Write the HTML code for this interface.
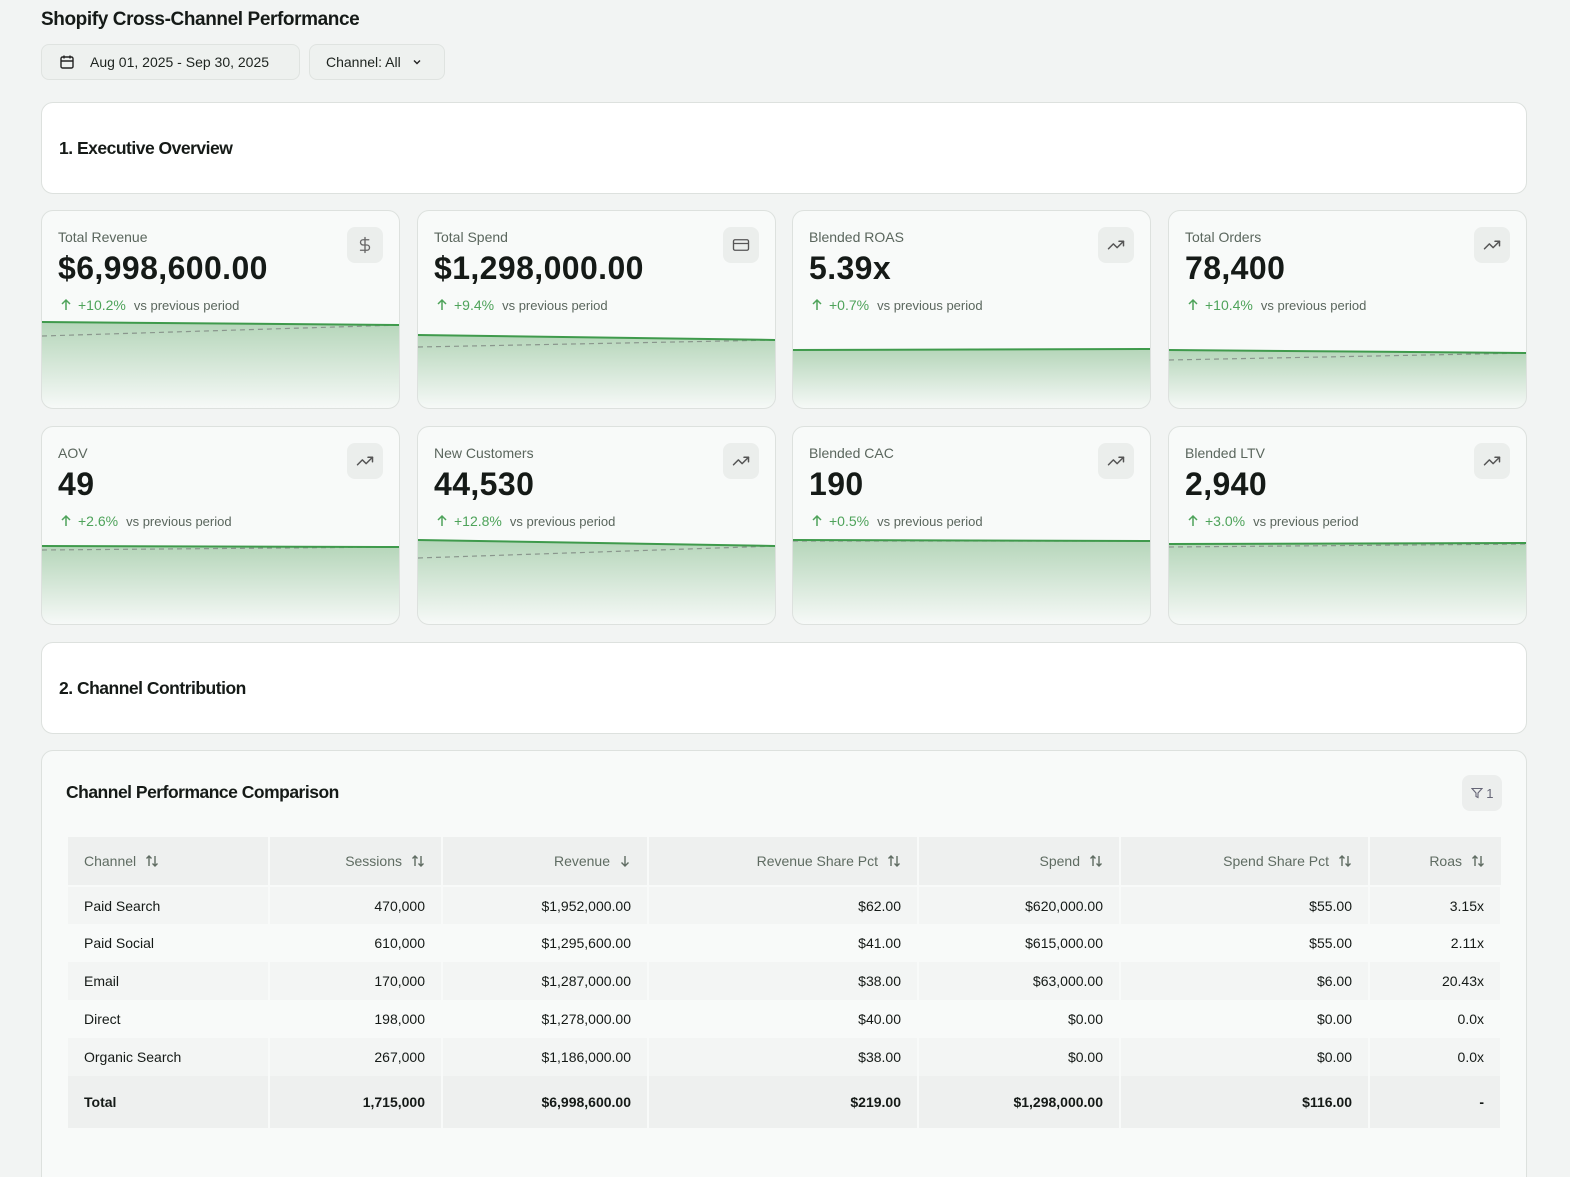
<!DOCTYPE html>
<html><head><meta charset="utf-8"><style>
*{box-sizing:border-box;margin:0;padding:0}
html,body{width:1570px;height:1177px;overflow:hidden}
body{background:#f2f4f3;font-family:"Liberation Sans",sans-serif;color:#151a17;position:relative}
.abs{position:absolute}
h1{position:absolute;left:41px;top:9px;font-size:19px;font-weight:700;letter-spacing:-0.4px}
.btn{position:absolute;top:44px;height:36px;border:1px solid #dfe3e0;border-radius:8px;background:#eef1ef;font-size:14px;display:flex;align-items:center;color:#1d231f}
.sec{position:absolute;left:41px;width:1486px;height:92px;background:#fff;border:1px solid #dde1de;border-radius:12px;font-size:17.5px;font-weight:700;padding-left:17px;display:flex;align-items:center;letter-spacing:-0.5px}
.card{position:absolute;width:359px;height:199px;background:#f8faf9;border:1px solid #dde1de;border-radius:12px;overflow:hidden}
.card svg.ch{position:absolute;left:0;top:0}
.lbl{position:absolute;left:16px;top:18px;font-size:14px;color:#5a665d}
.val{position:absolute;left:16px;top:39px;font-size:32px;font-weight:700;letter-spacing:0.4px}
.chg{position:absolute;left:17px;top:86px;font-size:13px;color:#5a665d;display:flex;align-items:center}
.chg b{font-weight:400;color:#4ea35a;font-size:14px;margin:0 8px 0 5px}
.ic{position:absolute;right:16px;top:16px;width:36px;height:36px;border-radius:8px;background:#ebeeec;display:flex;align-items:center;justify-content:center}
.tcard{position:absolute;left:41px;top:750px;width:1486px;height:440px;background:#f8faf9;border:1px solid #dde1de;border-radius:12px}
table{position:absolute;left:26px;top:86px;border-collapse:collapse;font-size:14px}
td,th{height:38px;padding:0 16px;text-align:right;border-right:2px solid #f8faf9}
td:first-child,th:first-child{text-align:left}
th{height:49px;background:#eef0ef;font-weight:400;color:#5f6c62;border-bottom:2px solid #f8faf9}
tr.a td{background:#f3f5f4}
tr.t td{height:52px;background:#eef0ef;font-weight:700}
.s{display:inline-block;margin-left:9px;vertical-align:-2px}
</style></head><body>
<h1>Shopify Cross-Channel Performance</h1>
<div class="btn" style="left:41px;width:259px"><svg style="margin:0 15px 0 17px" width="16" height="16" viewBox="0 0 16 16" fill="none" stroke="#222" stroke-width="1.4"><rect x="2" y="3" width="12" height="11" rx="1.5"/><path d="M2 7h12M5 1.5v3M11 1.5v3"/></svg>Aug 01, 2025 - Sep 30, 2025</div>
<div class="btn" style="left:309px;width:136px;padding-left:16px">Channel: All<svg style="margin-left:10px" width="12" height="12" viewBox="0 0 12 12" fill="none" stroke="#222" stroke-width="1.4"><path d="M3 4.5l3 3 3-3"/></svg></div>
<div class="sec" style="top:102px">1. Executive Overview</div>
<div class="sec" style="top:642px">2. Channel Contribution</div>

<div id="cards"></div>

<div class="tcard">
<div class="abs" style="left:24px;top:31px;font-size:17.5px;font-weight:700;letter-spacing:-0.5px">Channel Performance Comparison</div>
<div class="abs" style="right:24px;top:24px;width:40px;height:36px;border-radius:8px;background:#eceeed;font-size:13px;color:#667;display:flex;align-items:center;justify-content:center"><svg width="12" height="12" viewBox="0 0 12 12" fill="none" stroke="#667" stroke-width="1.1"><path d="M1 1.5h10L7 6v4.5L5 9.5V6z"/></svg>&nbsp;1</div>
<table>
<tr><th style="width:201px">Channel</th><th style="width:173px">Sessions</th><th style="width:206px">Revenue</th><th style="width:270px">Revenue Share Pct</th><th style="width:202px">Spend</th><th style="width:249px">Spend Share Pct</th><th style="width:132px;border-right:0">Roas</th></tr>
<tr class="a"><td>Paid Search</td><td>470,000</td><td>$1,952,000.00</td><td>$62.00</td><td>$620,000.00</td><td>$55.00</td><td>3.15x</td></tr>
<tr><td>Paid Social</td><td>610,000</td><td>$1,295,600.00</td><td>$41.00</td><td>$615,000.00</td><td>$55.00</td><td>2.11x</td></tr>
<tr class="a"><td>Email</td><td>170,000</td><td>$1,287,000.00</td><td>$38.00</td><td>$63,000.00</td><td>$6.00</td><td>20.43x</td></tr>
<tr><td>Direct</td><td>198,000</td><td>$1,278,000.00</td><td>$40.00</td><td>$0.00</td><td>$0.00</td><td>0.0x</td></tr>
<tr class="a"><td>Organic Search</td><td>267,000</td><td>$1,186,000.00</td><td>$38.00</td><td>$0.00</td><td>$0.00</td><td>0.0x</td></tr>
<tr class="t"><td>Total</td><td>1,715,000</td><td>$6,998,600.00</td><td>$219.00</td><td>$1,298,000.00</td><td>$116.00</td><td>-</td></tr>
</table>
</div>
<script>
const up='<svg width="14" height="14" viewBox="0 0 14 14" fill="none" stroke="#4ea35a" stroke-width="1.5"><path d="M7 12V2M3 6l4-4 4 4"/></svg>';
const trend='<svg width="18" height="18" viewBox="0 0 24 24" fill="none" stroke="#555" stroke-width="2" stroke-linecap="round" stroke-linejoin="round"><path d="M22 7l-8.5 8.5-5-5L2 17"/><path d="M16 7h6v6"/></svg>';
const dollar='<svg width="18" height="20" viewBox="0 0 24 24" fill="none" stroke="#666" stroke-width="1.8" stroke-linecap="round"><path d="M12 2v20M17 5H9.5a3.5 3.5 0 0 0 0 7h5a3.5 3.5 0 0 1 0 7H6"/></svg>';
const cardI='<svg width="20" height="18" viewBox="0 0 24 24" fill="none" stroke="#555" stroke-width="1.8"><rect x="2" y="5" width="20" height="14" rx="2"/><path d="M2 10h20"/></svg>';
const C=[
[41,210,"Total Revenue","$6,998,600.00","+10.2%",dollar,111,114,125,114],
[417,210,"Total Spend","$1,298,000.00","+9.4%",cardI,124,129,136,129],
[792,210,"Blended ROAS","5.39x","+0.7%",trend,139,138,139,138],
[1168,210,"Total Orders","78,400","+10.4%",trend,139,142,149,142],
[41,426,"AOV","49","+2.6%",trend,119,120,123,120],
[417,426,"New Customers","44,530","+12.8%",trend,113,119,131,119],
[792,426,"Blended CAC","190","+0.5%",trend,113,114,114,114],
[1168,426,"Blended LTV","2,940","+3.0%",trend,117,116,120,117]];
let h='';C.forEach((c,i)=>{h+=`<div class="card" style="left:${c[0]}px;top:${c[1]}px">
<svg class="ch" width="359" height="199" viewBox="0 0 359 199"><defs><linearGradient id="g${i}" x1="0" y1="0" x2="0" y2="1"><stop offset="0" stop-color="#a9cfae" stop-opacity=".85"/><stop offset="1" stop-color="#a9cfae" stop-opacity="0"/></linearGradient></defs>
<path d="M0 ${c[6]} L359 ${c[7]} L359 199 L0 199Z" fill="url(#g${i})"/>
<path d="M0 ${c[8]} L359 ${c[9]}" stroke="#8a968d" stroke-width="1.2" stroke-dasharray="5 4" fill="none"/>
<path d="M0 ${c[6]} L359 ${c[7]}" stroke="#3f9a4c" stroke-width="2" fill="none"/></svg>
<div class="lbl">${c[2]}</div><div class="val">${c[3]}</div><div class="chg">${up}<b>${c[4]}</b>vs previous period</div><div class="ic">${c[5]}</div></div>`});
document.getElementById('cards').innerHTML=h;
const ud='<svg class="s" width="14" height="14" viewBox="0 0 14 14" fill="none" stroke="#5f6c62" stroke-width="1.4"><path d="M4 12V2M1.5 4.5L4 2l2.5 2.5M10 2v10M7.5 9.5L10 12l2.5-2.5"/></svg>';
const dn='<svg class="s" width="12" height="14" viewBox="0 0 12 14" fill="none" stroke="#5f6c62" stroke-width="1.4"><path d="M6 2v10M2.5 8.5L6 12l3.5-3.5"/></svg>';
document.querySelectorAll('th').forEach((t,i)=>t.insertAdjacentHTML('beforeend',i==2?dn:ud));
</script>
</body></html>
